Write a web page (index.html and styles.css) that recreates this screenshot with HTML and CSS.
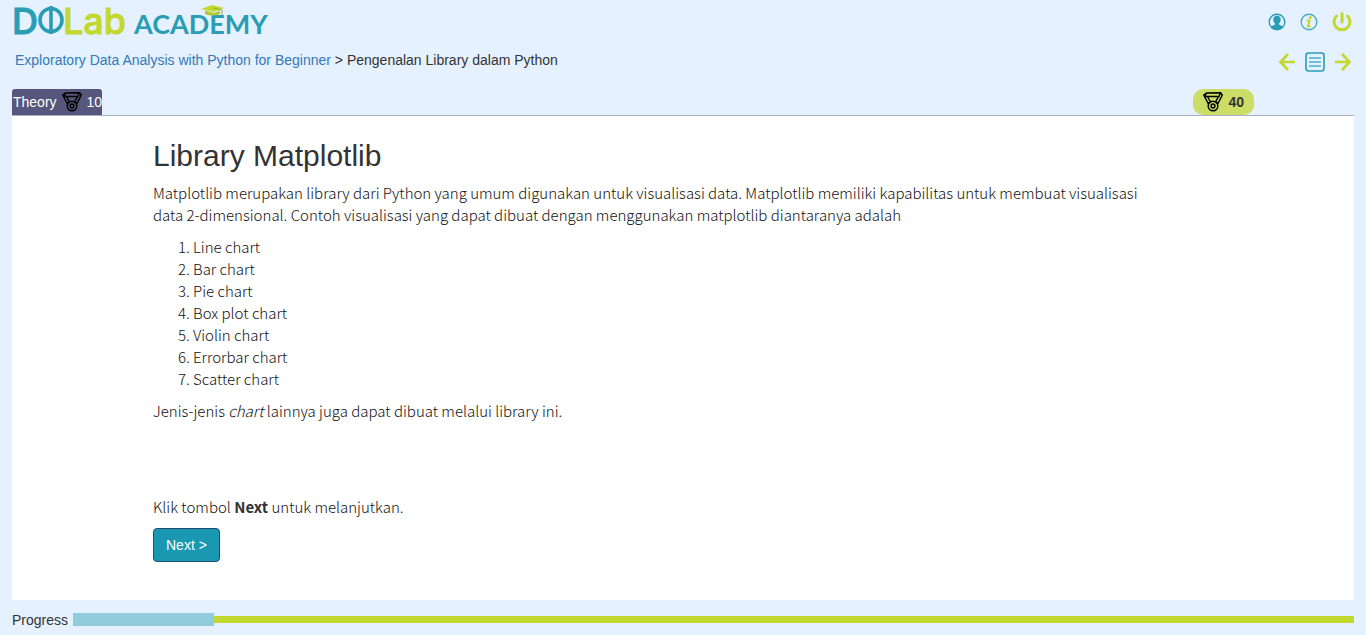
FILE: index.html
```html
<!DOCTYPE html>
<html lang="id">
<head>
<meta charset="utf-8">
<meta name="viewport" content="width=device-width, initial-scale=1">
<title>DQLab Academy</title>
<link rel="stylesheet" href="styles.css">
</head>
<body>
<svg class="sprite" aria-hidden="true">
  <symbol id="medal" viewBox="0 0 20 20">
    <g fill="none" stroke="#000" stroke-width="1.500" stroke-linejoin="round">
      <path d="M3.500 1L17.500 .8L16 4.500H2z"/>
      <path d="M3.500 1L.7 3L5.200 11.500L7.500 10L4.500 4.500M17.500 .8L19.300 3L15 11.500L12.500 10L15.500 4.500"/>
      <circle cx="10" cy="14" r="4.800"/>
      <circle cx="10" cy="14" r="1.900"/>
    </g>
  </symbol>
</svg>
<header class="topbar">
  <a class="logo" href="#" aria-label="DQLab Academy">
    <svg width="264" height="44" viewBox="0 0 264 44">
      <g class="logo-name">
        <text x="4" y="34" class="teal">D</text>
        <text x="55" y="34" class="lime">Lab</text>
      </g>
      <g fill="none" stroke="#2a9db5" stroke-width="3.600"><ellipse cx="43" cy="20" rx="11" ry="11.500"/><path d="M43 6V34"/></g>
      <text x="126" y="34" class="logo-sub teal">ACADEMY</text>
      <path d="M193 9L204 5L216 8L206 12z" fill="#c3d82e"/>
      <path d="M197 10.500V14Q205 17 212 14V10.500L206 13z" fill="#b3c72f"/>
      <path d="M205 8L214 10V15" fill="none" stroke="#8fae3a"/>
    </svg>
  </a>
  <nav class="icons" aria-label="Akun">
    <a href="#" aria-label="Profil"><svg width="18" height="18" viewBox="0 0 18 18"><circle cx="9" cy="9" r="7.800" fill="#e5f1ff" stroke="#2a9db5" stroke-width="1.400"/><path d="M9 2.800c-2.600 0-3.900 1.800-3.700 4 .1 1.700.8 2.800 1.700 3.500v1.200L3 13.500Q5.500 17 9 17t6-3.500l-4-2v-1.200c.9-.7 1.600-1.800 1.700-3.500.2-2.200-1.100-4-3.700-4z" fill="#2a9db5"/></svg></a>
    <a href="#" aria-label="Info"><svg width="18" height="18" viewBox="0 0 18 18"><circle cx="9" cy="9" r="7.800" fill="none" stroke="#4bacc2" stroke-width="1.400"/><circle cx="10.300" cy="4.500" r="1.500" fill="#c3d82e"/><path d="M6.800 7.500H9.500L8 13.500H10.500" fill="none" stroke="#c3d82e" stroke-width="2.200"/></svg></a>
    <a href="#" aria-label="Keluar"><svg width="20" height="20" viewBox="0 0 20 20"><path d="M4.500 4A8 8 0 1 0 15.500 4M10 1.500V10" fill="none" stroke="#c3d82e" stroke-width="3" stroke-linecap="round"/></svg></a>
  </nav>
</header>
<div class="crumbbar">
  <nav aria-label="Breadcrumb"><a href="#">Exploratory Data Analysis with Python for Beginner</a> &gt; Pengenalan Library dalam Python</nav>
  <nav class="pager" aria-label="Bab">
    <a href="#" aria-label="Sebelumnya"><svg width="18" height="18" viewBox="0 0 18 18"><path d="M17 9H2.500M10 1L2.500 9L10 17" fill="none" stroke="#c3d82e" stroke-width="2.600"/></svg></a>
    <a href="#" aria-label="Daftar isi"><svg width="20" height="20" viewBox="0 0 20 20"><rect x="1" y="1" width="18" height="18" rx="2.500" fill="none" stroke="#2a9db5" stroke-width="1.600"/><path d="M4.500 6H15.500M4.500 10H15.500M4.500 14H15.500" stroke="#4bacc2" stroke-width="1.400" stroke-linecap="round"/></svg></a>
    <a href="#" aria-label="Berikutnya"><svg width="18" height="18" viewBox="0 0 18 18"><path d="M1 9H15.500M8 1L15.500 9L8 17" fill="none" stroke="#c3d82e" stroke-width="2.600"/></svg></a>
  </nav>
</div>
<div class="tabs">
  <button type="button" class="tab">Theory <svg width="20" height="20"><use href="#medal"/></svg> 10</button>
  <div class="score"><svg width="20" height="20"><use href="#medal"/></svg> 40</div>
</div>
<main class="panel">
  <article class="lesson">
    <h2>Library Matplotlib</h2>
    <p>Matplotlib merupakan library dari Python yang umum digunakan untuk visualisasi data. Matplotlib memiliki kapabilitas untuk membuat visualisasi data 2-dimensional. Contoh visualisasi yang dapat dibuat dengan menggunakan matplotlib diantaranya adalah</p>
    <ol>
      <li>Line chart</li>
      <li>Bar chart</li>
      <li>Pie chart</li>
      <li>Box plot chart</li>
      <li>Violin chart</li>
      <li>Errorbar chart</li>
      <li>Scatter chart</li>
    </ol>
    <p>Jenis-jenis <em>chart</em> lainnya juga dapat dibuat melalui library ini.</p>
    <p class="hint">Klik tombol <strong>Next</strong> untuk melanjutkan.</p>
    <button type="button" class="next">Next &gt;</button>
  </article>
</main>
<footer class="footer">
  <span id="progress-label">Progress</span>
  <div class="track" role="progressbar" aria-labelledby="progress-label" aria-valuenow="11" aria-valuemin="0" aria-valuemax="100"><div class="fill" style="width:11%"></div></div>
</footer>
</body>
</html>
```
FILE: styles.css
```css
* { box-sizing: border-box; }
body {
  margin: 0;
  min-height: 100vh;
  display: flex;
  flex-direction: column;
  background: #e5f1ff;
  color: #333;
  font: 14px/20px "Liberation Sans", Arial, sans-serif;
}
a { color: #337ab7; text-decoration: none; }
svg { display: block; flex: none; }
.sprite { position: absolute; width: 0; height: 0; }
.topbar, .crumbbar {
  display: flex;
  justify-content: space-between;
  padding: 0 14px;
}
.topbar { height: 44px; padding-left: 8px; }
.logo svg { overflow: visible; }
.logo-name { font: 500 36px/44px Inter, sans-serif; }
.logo-sub { font: bold 27px/44px Lato, sans-serif; }
.teal { fill: #2a9db5; }
.lime { fill: #c3d82e; }
.logo-name .teal { stroke: #2a9db5; }
.logo-name .lime { stroke: #c3d82e; }
.icons { display: flex; align-items: center; gap: 14px; }
.crumbbar { height: 45px; padding-left: 15px; padding-top: 6px; }
.pager { display: flex; align-items: center; gap: 9px; height: 24px; }
.tabs {
  display: flex;
  align-items: flex-end;
  justify-content: space-between;
  margin: 0 12px;
  border-bottom: 1px solid #a9aec9;
}
.tab, .score { display: flex; align-items: center; gap: 5px; height: 26px; }
.tab {
  padding: 0 0 0 1px;
  border: 0;
  border-radius: 3px 3px 0 0;
  background: #57567c;
  color: #fff;
  font: inherit;
}
.score {
  margin-right: 100px;
  padding: 0 10px;
  border-radius: 10px;
  background: #cbdd66;
  font-weight: bold;
}
.panel { flex: 1; margin: 0 12px; padding: 23px 0 38px 141px; background: #fff; }
.lesson {
  width: 83%;
  color: #111;
  font: 300 15px/22px "Noto Sans CJK SC", "Noto Sans", sans-serif;
}
h2 {
  margin: 0 0 10px;
  color: #333;
  font: 30px/33px "Liberation Sans", Arial, sans-serif;
}
p { margin: 0 0 10px; }
ol { margin: 0 0 10px; padding-left: 40px; }
.hint { margin-top: 74px; }
.hint strong { color: #333; font-weight: 700; }
.next {
  height: 34px;
  padding: 0 12px;
  border: 1px solid #204d74;
  border-radius: 4px;
  background: #1a98b2;
  color: #fff;
  font: 14px/20px "Liberation Sans", Arial, sans-serif;
}
.footer { display: flex; align-items: center; gap: 5px; height: 35px; padding: 4px 12px 0; }
.track {
  flex: 1;
  display: flex;
  align-items: center;
  height: 13px;
  background: linear-gradient(#c3d82e, #c3d82e) center / 100% 7px no-repeat;
}
.fill { height: 13px; background: #91ccdc; }
```
